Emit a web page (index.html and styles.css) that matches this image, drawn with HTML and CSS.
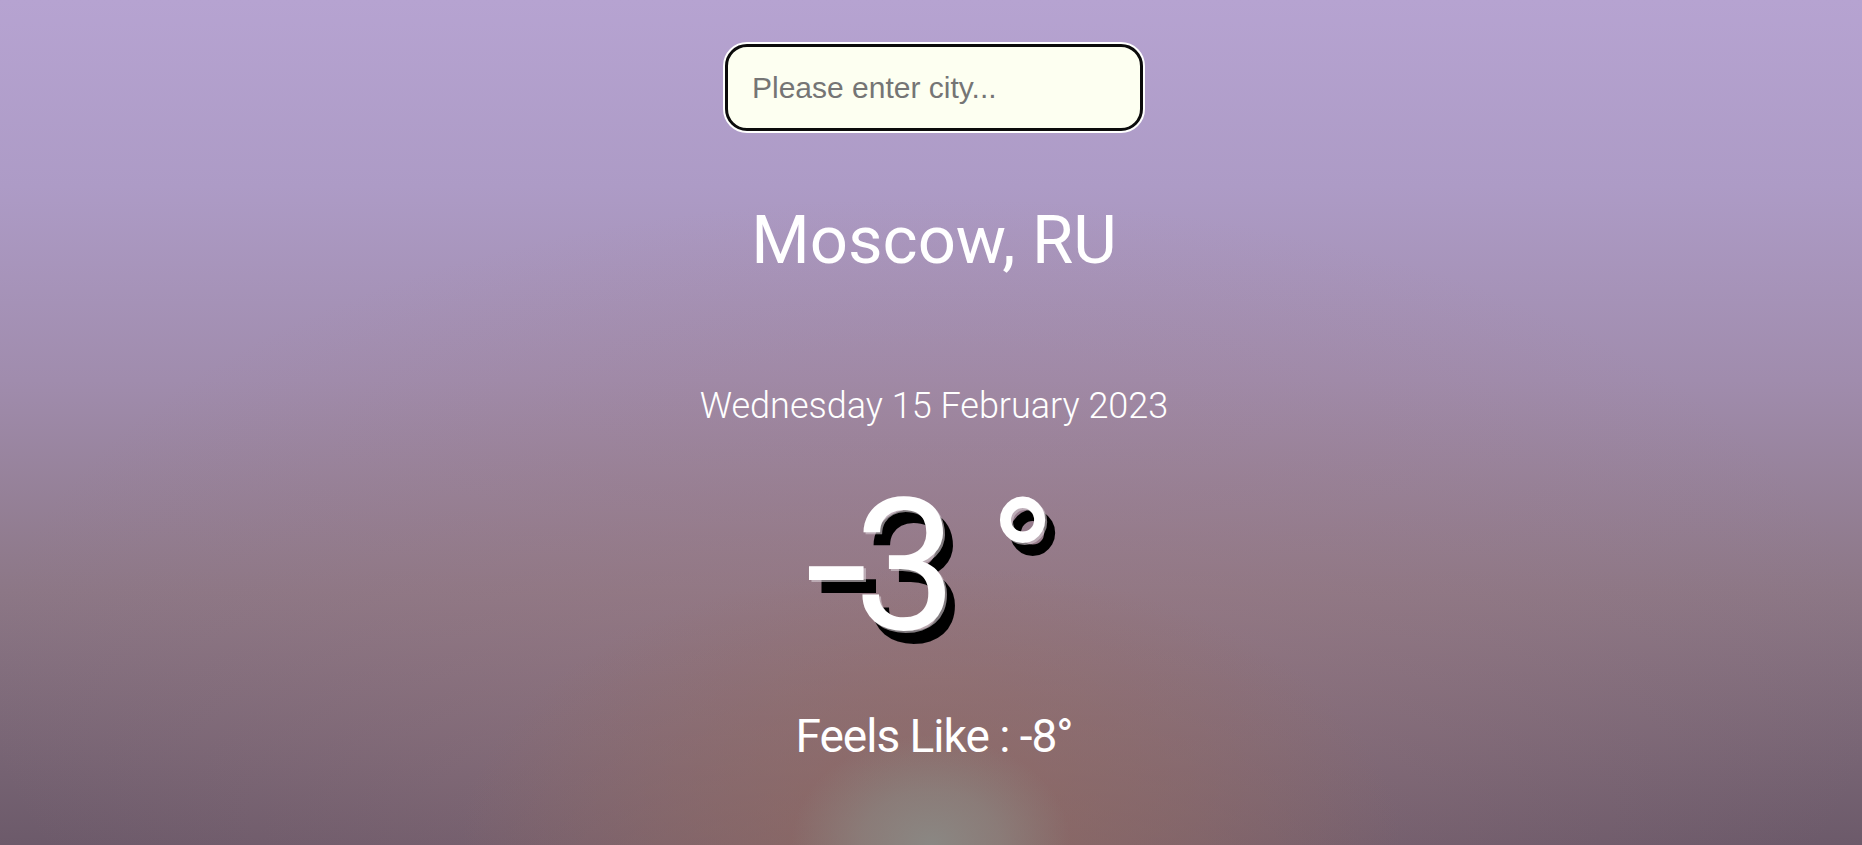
FILE: index.html
```html
<!DOCTYPE html>
<html lang="en">
<head>
<meta charset="utf-8">
<title>Weather</title>
<link rel="stylesheet" href="styles.css">
</head>
<body>
<main class="app">
  <input class="search" type="text" placeholder="Please enter city..." autofocus>
  <h1 class="city">Moscow, RU</h1>
  <p class="date">Wednesday 15 February 2023</p>
  <div class="temp"><span class="minus">-</span>3 °</div>
  <p class="feels">Feels Like : -8°</p>
</main>
</body>
</html>
```
FILE: styles.css
```css
html, body {
  margin: 0;
  height: 100%;
  overflow: hidden;
}

body {
  font-family: Roboto, "Noto Sans", sans-serif;
  color: #fff;
  background:
    radial-gradient(ellipse 140px 110px at 50% 100%, rgba(138,137,133,0.95) 0%, rgba(138,136,132,0.6) 50%, rgba(138,136,132,0) 100%),
    radial-gradient(ellipse 470px 280px at 50% 100%, rgba(145,106,96,0.8) 0%, rgba(145,106,96,0.4) 55%, rgba(145,106,96,0) 100%),
    radial-gradient(ellipse 950px 480px at 50% 80%, rgba(160,122,128,0.45) 0%, rgba(160,122,128,0) 100%),
    linear-gradient(180deg, #b6a3d1 0%, #ad9bc6 22%, #a08cad 45%, #8c7786 70%, #6c5a6a 100%);
}

.app {
  display: flex;
  flex-direction: column;
  align-items: center;
  padding: 44px 0 0 6px;
}

.search {
  box-sizing: border-box;
  width: 418px;
  height: 87px;
  border: 3px solid #0b0b0b;
  border-radius: 22px;
  box-shadow: 0 0 0 2px #ffffff;
  background: #fdfff1;
  padding: 0 20px 0 24px;
  font-family: "Liberation Sans", Arial, sans-serif;
  font-size: 30px;
  color: #222;
  outline: none;
}

.search::placeholder {
  color: #757575;
}

.city {
  margin: 70px 0 0;
  font-size: 67px;
  font-weight: 400;
  line-height: normal;
}

.date {
  margin: 106px 0 0;
  font-size: 36px;
  font-weight: 300;
  line-height: normal;
}

.temp {
  margin-top: 32px;
  font-size: 183px;
  font-weight: 400;
  line-height: normal;
  word-spacing: -14px;
  text-shadow: 2px 2px rgba(215,205,212,0.6), 10px 13px #000;
}

.minus {
  display: inline-block;
  transform: scaleX(1.25);
  margin-right: -8px;
}

.feels {
  margin: 35px 0 0;
  font-size: 46px;
  font-weight: 400;
  letter-spacing: -1px;
  line-height: normal;
}
```
